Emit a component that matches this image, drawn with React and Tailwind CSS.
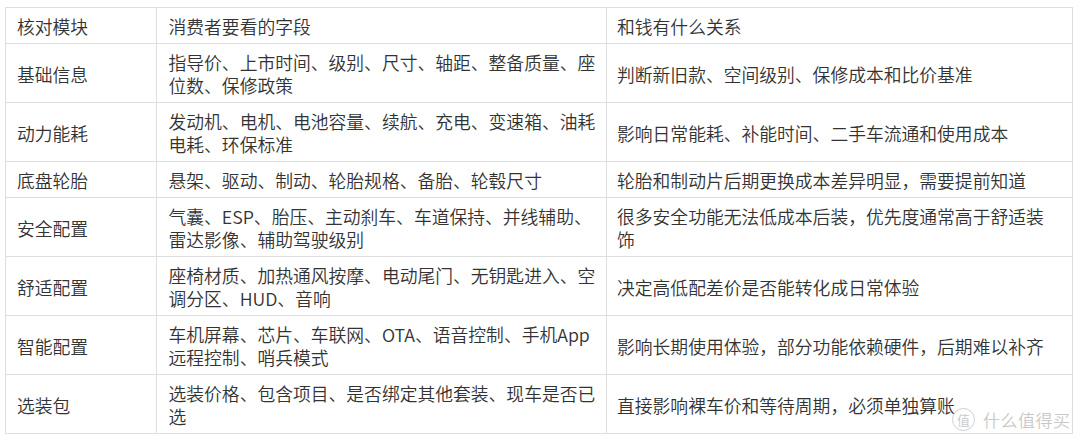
const ROWS = [
  ['基础信息', ['指导价、上市时间、级别、尺寸、轴距、整备质量、座', '位数、保修政策'], ['判断新旧款、空间级别、保修成本和比价基准']],
  ['动力能耗', ['发动机、电机、电池容量、续航、充电、变速箱、油耗', '电耗、环保标准'], ['影响日常能耗、补能时间、二手车流通和使用成本']],
  ['底盘轮胎', ['悬架、驱动、制动、轮胎规格、备胎、轮毂尺寸'], ['轮胎和制动片后期更换成本差异明显，需要提前知道']],
  ['安全配置', ['气囊、ESP、胎压、主动刹车、车道保持、并线辅助、', '雷达影像、辅助驾驶级别'], ['很多安全功能无法低成本后装，优先度通常高于舒适装', '饰']],
  ['舒适配置', ['座椅材质、加热通风按摩、电动尾门、无钥匙进入、空', '调分区、HUD、音响'], ['决定高低配差价是否能转化成日常体验']],
  ['智能配置', ['车机屏幕、芯片、车联网、OTA、语音控制、手机App', '远程控制、哨兵模式'], ['影响长期使用体验，部分功能依赖硬件，后期难以补齐']],
  ['选装包', ['选装价格、包含项目、是否绑定其他套装、现车是否已', '选'], ['直接影响裸车价和等待周期，必须单独算账']],
];

function Lines({ lines }) {
  return lines.map((l, i) => (
    <span key={i} className="block whitespace-nowrap">{l}</span>
  ));
}

export default function App() {
  return (
    <div className="relative w-[1080px] h-[442px] overflow-hidden bg-white pt-[7px] pl-[4.5px] font-['Noto_Sans_CJK_SC','Microsoft_YaHei',sans-serif] font-[350] text-[#333] text-[17.8px] leading-[23px]">
      <table className="table-fixed border-collapse w-[1067px]">
        <colgroup>
          <col className="w-[151px]" />
          <col className="w-[450px]" />
          <col className="w-[466px]" />
        </colgroup>
        <tbody>
          <tr>
            <td className="border border-[#dedede] pl-[11.5px] pr-2 pt-[7px] pb-[5px] align-middle">核对模块</td>
            <td className="border border-[#dedede] pl-3 pr-2 pt-[7px] pb-[5px] align-middle">消费者要看的字段</td>
            <td className="border border-[#dedede] pl-[10.5px] pr-2 pt-[7px] pb-[5px] align-middle">和钱有什么关系</td>
          </tr>
          {ROWS.map(([mod, fields, money]) => (
            <tr key={mod}>
              <td className="border border-[#dedede] pl-[11.5px] pr-2 pt-[7px] pb-[5px] align-middle">{mod}</td>
              <td className="border border-[#dedede] pl-3 pr-2 pt-[7px] pb-[5px] align-middle"><Lines lines={fields} /></td>
              <td className="border border-[#dedede] pl-[10.5px] pr-2 pt-[7px] pb-[5px] align-middle"><Lines lines={money} /></td>
            </tr>
          ))}
        </tbody>
      </table>

      {/* watermark */}
      <div className="absolute left-[952px] top-[408px] flex items-center gap-[8px] text-[#c9c9c9] [text-shadow:0_0_2px_#fff,0_0_1px_#fff]">
        <span className="flex items-center justify-center w-[23px] h-[23px] rounded-full border-[1.5px] border-[#cfcfcf] text-[13px] leading-none">值</span>
        <span className="text-[17px] leading-none tracking-[0.5px]">什么值得买</span>
      </div>
    </div>
  );
}
